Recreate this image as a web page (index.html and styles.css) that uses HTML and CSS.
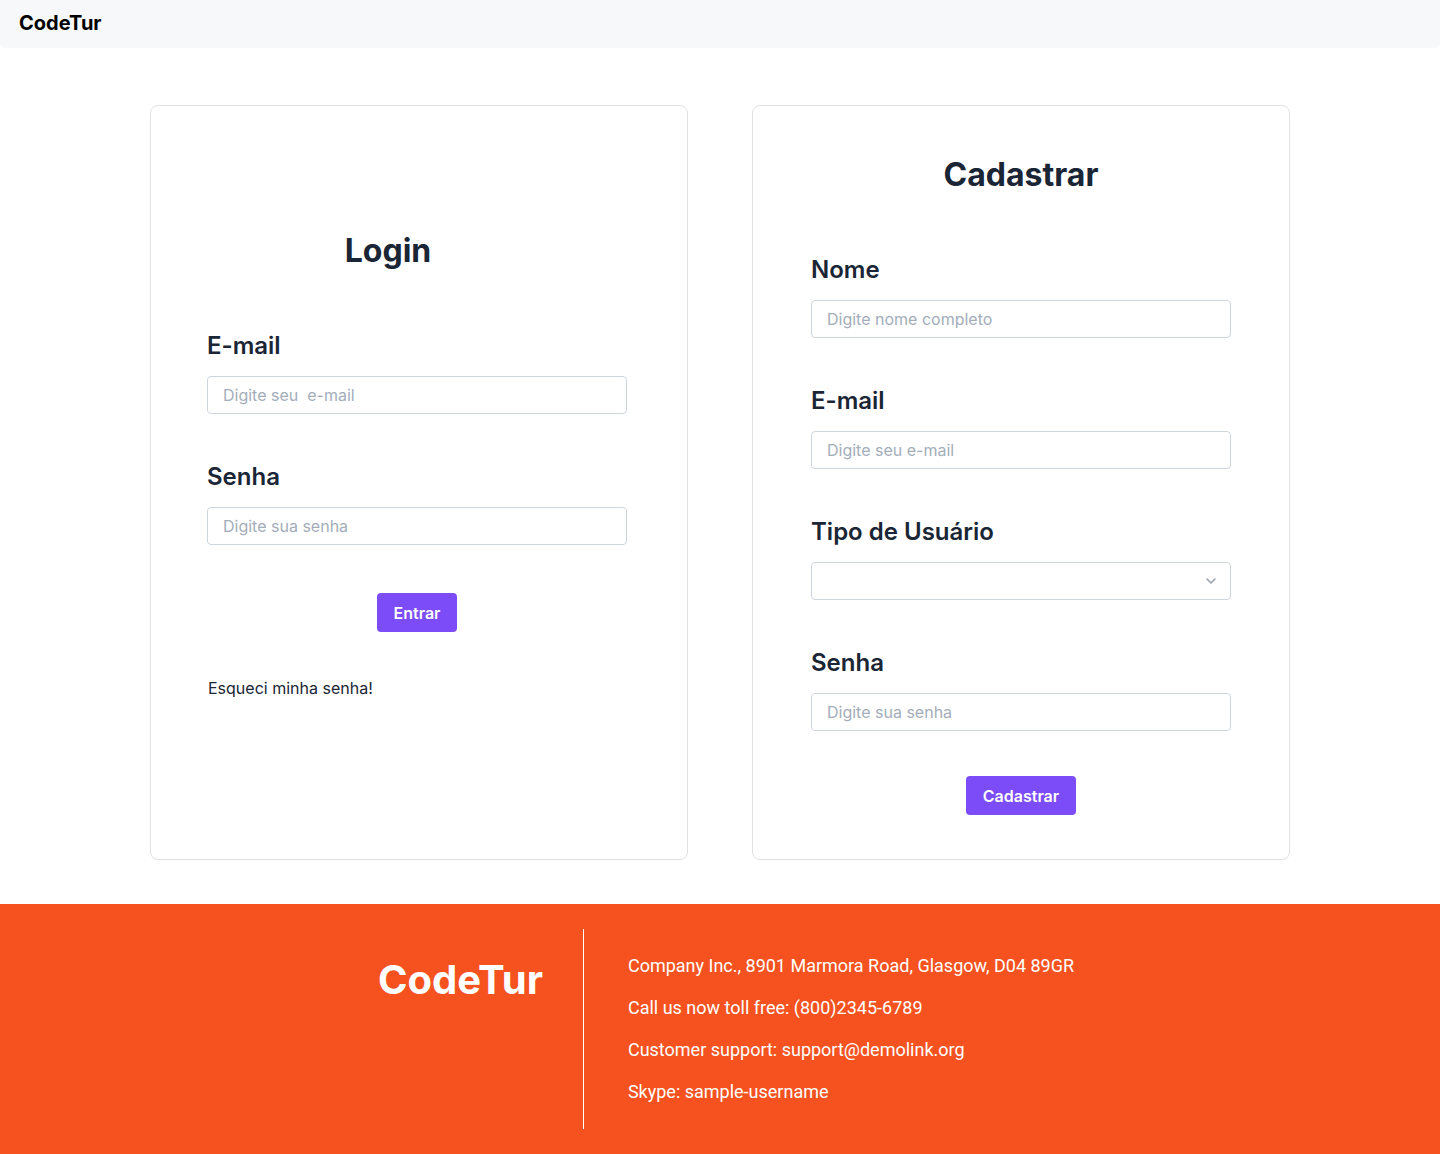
FILE: index.html
```html
<!DOCTYPE html>
<html lang="pt-BR">
<head>
<meta charset="utf-8">
<title>CodeTur</title>
<link rel="stylesheet" href="styles.css">
</head>
<body>
<header class="topbar">
  <span class="brand">CodeTur</span>
</header>

<main class="cards">
  <section class="card login">
    <h1 class="card-title">Login</h1>
    <form class="form">
      <div class="field">
        <label class="label">E-mail</label>
        <input class="input" type="email" placeholder="Digite seu  e-mail">
      </div>
      <div class="field">
        <label class="label">Senha</label>
        <input class="input" type="password" placeholder="Digite sua senha">
      </div>
      <div class="actions">
        <button class="btn" type="button">Entrar</button>
      </div>
      <p class="forgot">Esqueci minha senha!</p>
    </form>
  </section>

  <section class="card signup">
    <h1 class="card-title">Cadastrar</h1>
    <form class="form">
      <div class="field">
        <label class="label">Nome</label>
        <input class="input" type="text" placeholder="Digite nome completo">
      </div>
      <div class="field">
        <label class="label">E-mail</label>
        <input class="input" type="email" placeholder="Digite seu e-mail">
      </div>
      <div class="field">
        <label class="label">Tipo de Usuário</label>
        <div class="select-wrap">
          <select class="input select"><option></option></select>
          <svg class="chevron" width="12" height="12" viewBox="0 0 12 12"><path d="M2 4 L6 8 L10 4" fill="none" stroke="#9aa3b0" stroke-width="1.6" stroke-linecap="round" stroke-linejoin="round"/></svg>
        </div>
      </div>
      <div class="field">
        <label class="label">Senha</label>
        <input class="input" type="password" placeholder="Digite sua senha">
      </div>
      <div class="actions">
        <button class="btn" type="button">Cadastrar</button>
      </div>
    </form>
  </section>
</main>

<footer class="footer">
  <div class="footer-inner">
    <div class="footer-brand">CodeTur</div>
    <div class="footer-divider"></div>
    <ul class="footer-info">
      <li>Company Inc., 8901 Marmora Road, Glasgow, D04 89GR</li>
      <li>Call us now toll free: (800)2345-6789</li>
      <li>Customer support: support@demolink.org</li>
      <li>Skype: sample-username</li>
    </ul>
  </div>
</footer>
</body>
</html>
```

FILE: styles.css
```css
* { box-sizing: border-box; }

body {
  margin: 0;
  font-family: Inter, "Noto Sans", sans-serif;
  color: #1a2535;
  background: #fff;
}

.topbar {
  height: 48px;
  background: #f7f8fa;
  border-radius: 0 0 6px 6px;
  display: flex;
  align-items: center;
  padding-left: 19px;
}

.brand {
  font-size: 20px;
  font-weight: 700;
  color: #000;
  line-height: 1;
  margin-top: -2px;
}

.cards {
  display: flex;
  justify-content: center;
  gap: 64px;
  margin-top: 57px;
  margin-bottom: 44px;
}

.card {
  width: 538px;
  border: 1px solid #e1e1e1;
  border-radius: 8px;
  padding: 49px 0 44px;
}

.login { padding-top: 125px; }

.card-title {
  margin: 0;
  font-size: 32px;
  line-height: 40px;
  font-weight: 700;
  text-align: center;
  color: #1a2535;
}

.login .card-title { padding-right: 62px; }

.form {
  width: 420px;
  margin: 59px auto 0;
}

.login .form { margin-left: 56px; }

.field + .field { margin-top: 47px; }

.label {
  display: block;
  font-size: 24px;
  line-height: 32px;
  font-weight: 600;
  margin-bottom: 14px;
  color: #1a2535;
}

.input {
  display: block;
  width: 100%;
  height: 38px;
  border: 1px solid #cfd5dd;
  border-radius: 4px;
  padding: 0 15px;
  font-family: Inter, sans-serif;
  font-size: 16px;
  color: #1a2535;
  background: #fff;
  outline: none;
}

.input::placeholder { color: #a3adba; }

.select-wrap { position: relative; }

.select {
  appearance: none;
  -webkit-appearance: none;
}

.chevron {
  position: absolute;
  right: 14px;
  top: 13px;
  pointer-events: none;
}

.actions {
  display: flex;
  justify-content: center;
  margin-top: 48px;
}

.signup .actions { margin-top: 45px; }

.btn {
  height: 39px;
  padding: 0 17px;
  border: 0;
  border-radius: 4px;
  background: #7b4cf8;
  color: #fff;
  font-family: Inter, sans-serif;
  font-size: 16px;
  font-weight: 600;
}

.forgot {
  margin: 44px 0 0 1px;
  font-size: 16px;
  line-height: 24px;
  color: #1a2535;
}

.footer {
  background: #f5521f;
  height: 250px;
  padding: 25px 0;
}

.footer-inner {
  display: flex;
  justify-content: center;
  height: 200px;
  padding-left: 12px;
}

.footer-brand {
  font-size: 40px;
  line-height: 48px;
  font-weight: 700;
  color: #fff;
  margin-top: 27px;
}

.footer-divider {
  width: 1px;
  background: #fff;
  margin: 0 44px 0 40px;
}

.footer-info {
  list-style: none;
  margin: 0;
  padding: 25px 0 0;
  display: flex;
  flex-direction: column;
  gap: 18px;
  font-family: Roboto, sans-serif;
  font-size: 18px;
  line-height: 24px;
  color: #fff;
}
```
